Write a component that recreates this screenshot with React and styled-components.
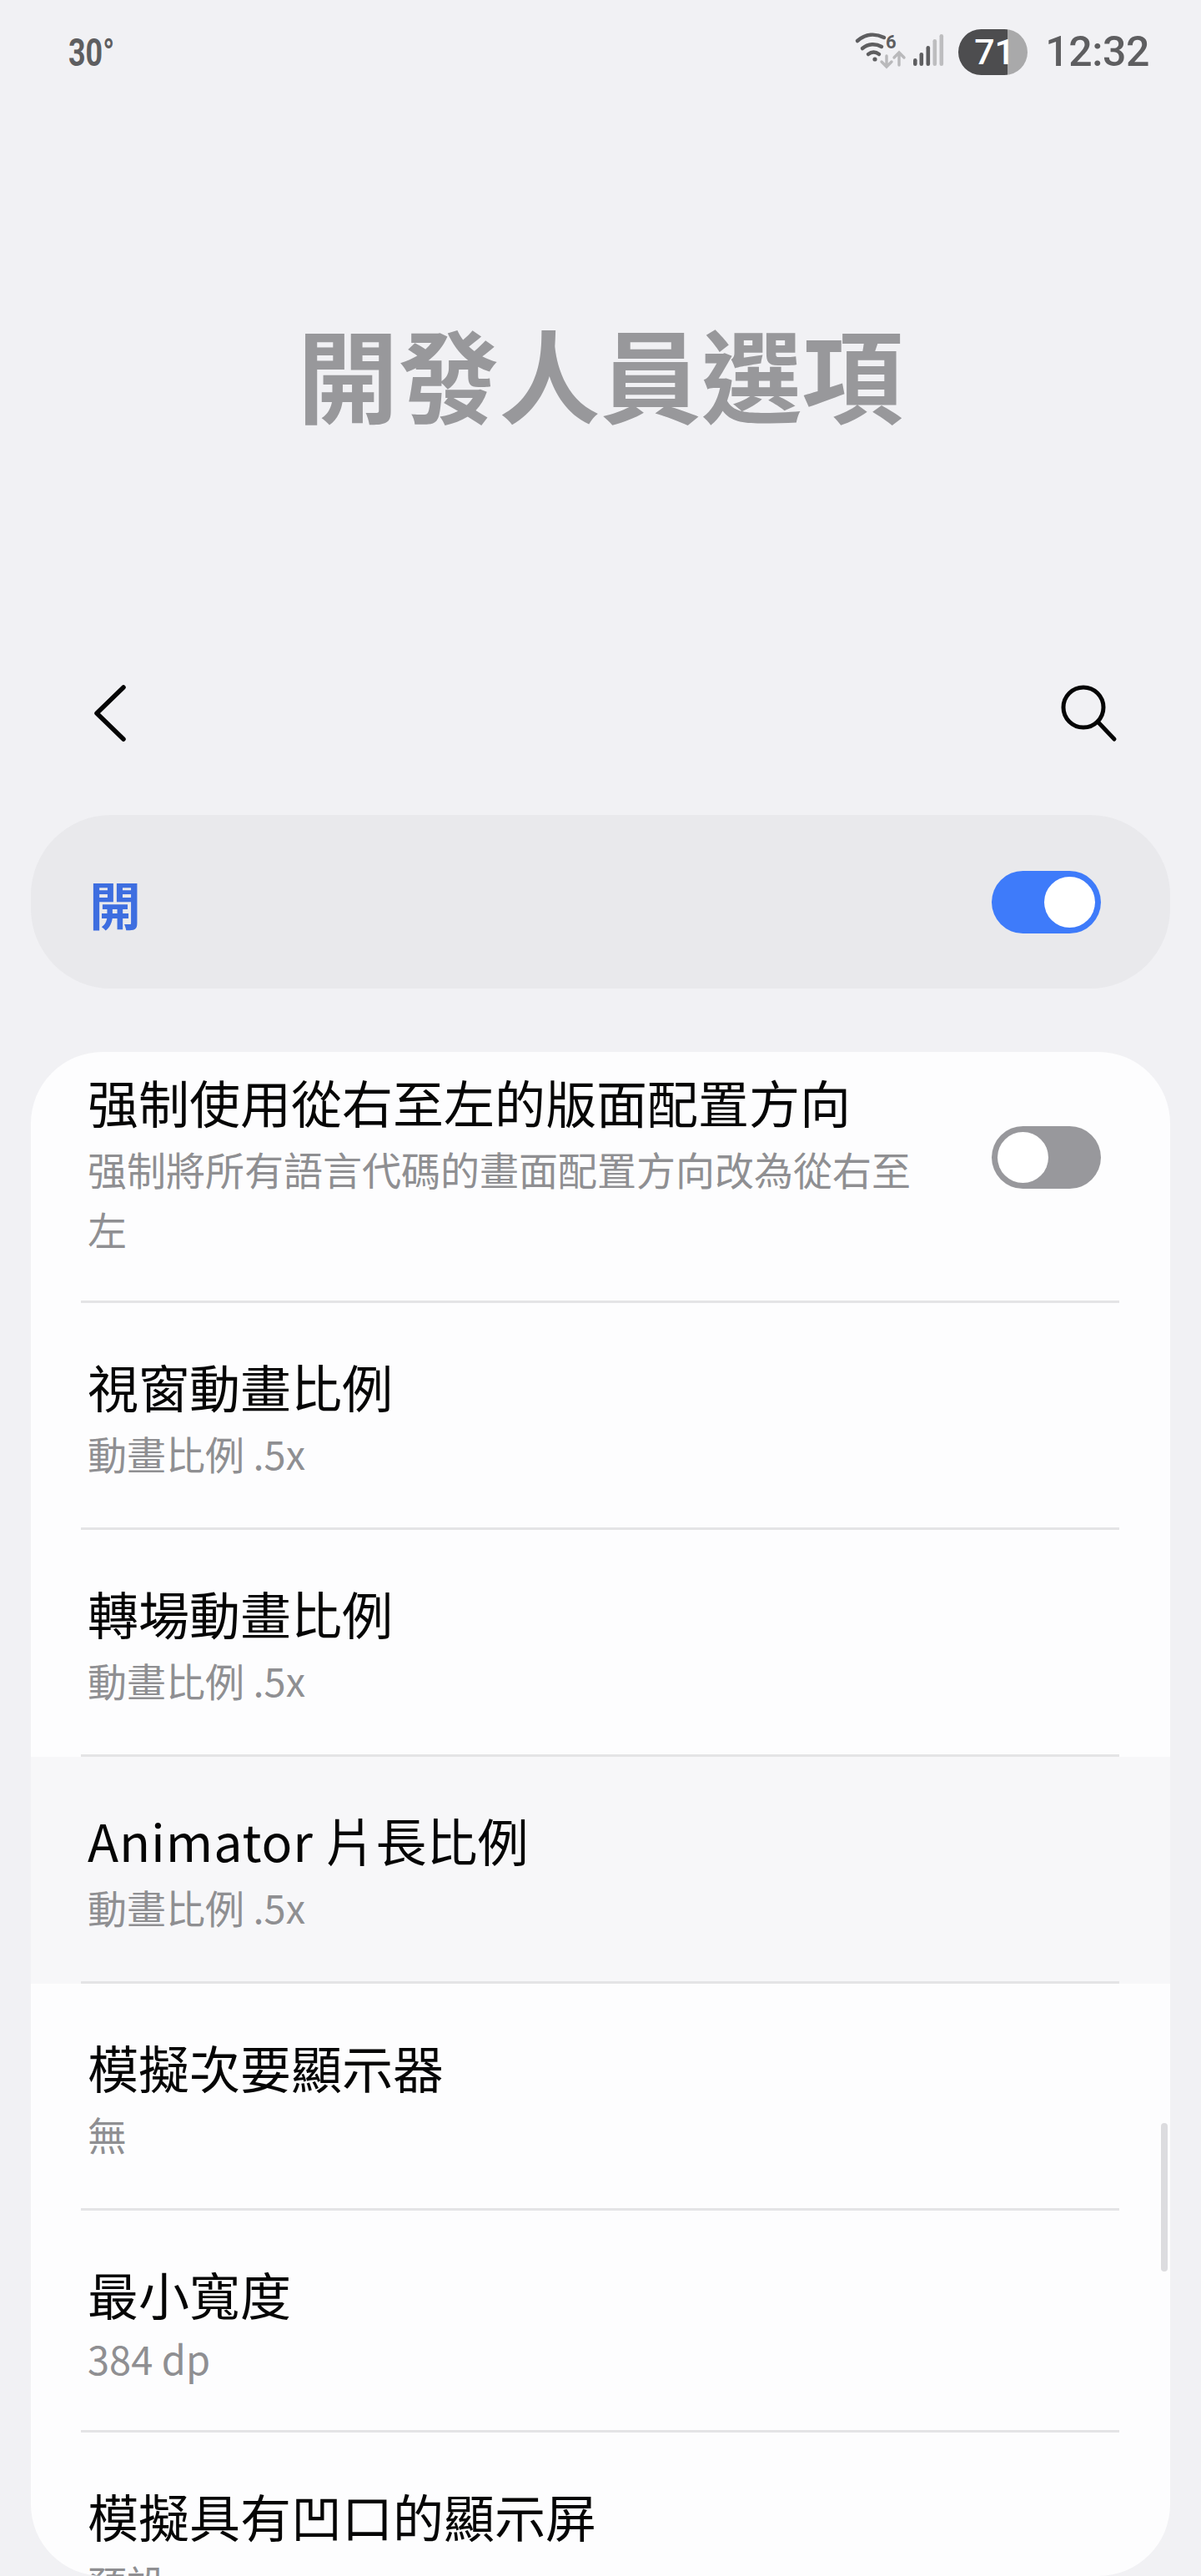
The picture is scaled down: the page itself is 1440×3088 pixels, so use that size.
import React from "react";
import styled, { createGlobalStyle } from "styled-components";

const Global = createGlobalStyle`
  html, body { margin: 0; padding: 0; background: #f1f1f4; }
  * { box-sizing: border-box; }
`;
const CJK = `"Noto Sans CJK TC", "Noto Sans", sans-serif`;

const Page = styled.div`
  width: 1440px; height: 3088px; overflow: hidden; background: #f1f1f4;
  display: flex; flex-direction: column; font-family: ${CJK};
`;
const StatusBar = styled.div`
  height: 124px; flex: none; padding: 0 62px 0 82px;
  display: flex; align-items: center; justify-content: space-between;
`;
const Temp = styled.span`
  font: 700 46px/1 "Roboto", sans-serif; color: #5e5e60;
  display: inline-block; transform: scaleX(.78); transform-origin: left center; margin-top: 2px;
`;
const StatusRight = styled.div`display: flex; align-items: center;`;
const SignalIcon = styled.svg`margin-left: 5px;`;
const Battery = styled.div`
  width: 83px; height: 55px; border-radius: 28px; margin: 0 21px 0 12px;
  background: linear-gradient(90deg, #4d4d4f 0 59px, #a9a9aa 59px);
  color: #fff; font: 500 43px/55px "Roboto", sans-serif; padding-left: 19px;
`;
const Clock = styled.span`font: 500 50px/1 "Roboto", sans-serif; color: #5e5e60; letter-spacing: -.4px;`;
const TitleBlock = styled.div`
  height: 666px; flex: none; padding-bottom: 22px;
  display: flex; align-items: center; justify-content: center;
`;
const Title = styled.h1`
  margin: 0; font: 700 121px/1.2 ${CJK}; color: #98989b; padding-right: 1px;
`;
const Nav = styled.div`
  height: 130px; flex: none; padding: 0 100px 0 110px;
  display: flex; align-items: center; justify-content: space-between;
`;
const MasterBar = styled.div`
  margin: 57px 37px 76px; height: 208px; flex: none; border-radius: 96px; background: #e9e9ec;
  display: flex; align-items: center; justify-content: space-between; padding: 0 83px 0 70px;
`;
const MasterLabel = styled.span`font: 700 62px/1 ${CJK}; color: #3e6ee0; margin-top: 3px;`;
const Switch = styled.div`
  width: 131px; height: 75px; border-radius: 38px; flex: none; padding: 7px;
  margin-top: ${p => p.$top || 0}px;
  display: flex; justify-content: ${p => (p.$on ? "flex-end" : "flex-start")};
  background: ${p => (p.$on ? "#3e7bfa" : "#98989c")};
  &::after { content: ""; width: 61px; height: 61px; border-radius: 50%; background: #fff; }
`;
const Card = styled.div`
  position: relative; flex: 1; margin: 0 37px; background: #fdfdfe;
  border-radius: 86px; overflow: hidden;
`;
const Row = styled.div`
  padding: 60px 60px 0 68px;
  height: ${p => p.$h}px;
  background: ${p => (p.$active ? "#f7f7f9" : "transparent")};
  position: relative;
  display: flex;
  &::before {
    content: "";
    position: absolute; left: 60px; right: 61px; top: -3px; height: 3px; background: #e4e4e6;
  }
`;
const FirstRow = styled.div`
  height: 301px; padding: 20px 83px 0 68px; display: flex; align-items: flex-start;
`;
const RowText = styled.div`flex: 1; min-width: 0;`;
const RowTitle = styled.div`font: 400 61px/80px ${CJK}; color: #050505; white-space: nowrap;`;
const Latin = styled.span`letter-spacing: .9px;`;
const RowSub = styled.div`
  font: 400 47px/72px ${CJK}; color: #8f8f92; margin-top: ${p => (p.$tight ? 1 : 4)}px;
  max-width: 1000px;
`;
const Scroll = styled.div`
  position: absolute; right: 3px; top: 1284px; width: 8px; height: 178px; border-radius: 4px; background: #dcdcdf;
`;

const rows = [
  { t: "視窗動畫比例", s: "動畫比例 .5x" },
  { t: "轉場動畫比例", s: "動畫比例 .5x" },
  { t: <><Latin>Animator</Latin> 片長比例</>, s: "動畫比例 .5x", active: true },
  { t: "模擬次要顯示器", s: "無" },
  { t: "最小寬度", s: "384 dp", h: 266, tight: true },
  { t: "模擬具有凹口的顯示屏", s: "預設" },
];

export default function App() {
  return (
    <Page>
      <Global />
      <StatusBar>
        <Temp>30°</Temp>
        <StatusRight>
          <svg width="64" height="56" viewBox="0 0 64 56" fill="none" strokeLinecap="round">
            <path d="M4 15 C14 6 26 6 36 11" stroke="#5e5e60" strokeWidth="4.5" />
            <path d="M10 24 C17 18 26 18 33 22" stroke="#5e5e60" strokeWidth="4.5" />
            <path d="M17 31 C21 28 26 28 30 31" stroke="#5e5e60" strokeWidth="4.5" />
            <circle cx="25" cy="37" r="2.6" fill="#5e5e60" />
            <text x="38" y="24" fontFamily="Roboto, sans-serif" fontWeight="700" fontSize="22" fill="#5e5e60">6</text>
            <path d="M39 33 V46 M33 40 L39 46 L45 40" stroke="#b9b9bb" strokeWidth="3.4" />
            <path d="M54 44 V29 M48 35 L54 29 L60 35" stroke="#b9b9bb" strokeWidth="3.4" />
          </svg>
          <SignalIcon width="44" height="44" viewBox="0 0 44 44">
            <rect x="2" y="30" width="4.6" height="9" rx="2.3" fill="#5e5e60" />
            <rect x="9.5" y="23" width="4.6" height="16" rx="2.3" fill="#5e5e60" />
            <rect x="17.5" y="15" width="4.6" height="24" rx="2.3" fill="#5e5e60" />
            <rect x="25.5" y="7" width="4.6" height="32" rx="2.3" fill="#bdbdbf" />
            <rect x="33.5" y="1" width="4.6" height="38" rx="2.3" fill="#bdbdbf" />
          </SignalIcon>
          <Battery>71</Battery>
          <Clock>12:32</Clock>
        </StatusRight>
      </StatusBar>
      <TitleBlock><Title>開發人員選項</Title></TitleBlock>
      <Nav>
        <svg width="44" height="72" viewBox="0 0 44 72" fill="none" stroke="#050505" strokeWidth="5.5" strokeLinecap="round" strokeLinejoin="round">
          <path d="M38 5 L6 36 L38 67" />
        </svg>
        <svg width="70" height="70" viewBox="0 0 70 70" fill="none" stroke="#050505" strokeWidth="5" strokeLinecap="round">
          <circle cx="29" cy="28" r="24" />
          <path d="M46 45 L66 66" />
        </svg>
      </Nav>
      <MasterBar>
        <MasterLabel>開</MasterLabel>
        <Switch $on />
      </MasterBar>
      <Card>
        <FirstRow>
          <RowText>
            <RowTitle>强制使用從右至左的版面配置方向</RowTitle>
            <RowSub>强制將所有語言代碼的畫面配置方向改為從右至左</RowSub>
          </RowText>
          <Switch $top={69} />
        </FirstRow>
        {rows.map((r, i) => (
          <Row key={i} $h={r.h || 272} $active={r.active}>
            <RowText>
              <RowTitle>{r.t}</RowTitle>
              <RowSub $tight={r.tight}>{r.s}</RowSub>
            </RowText>
          </Row>
        ))}
        <Scroll />
      </Card>
    </Page>
  );
}
